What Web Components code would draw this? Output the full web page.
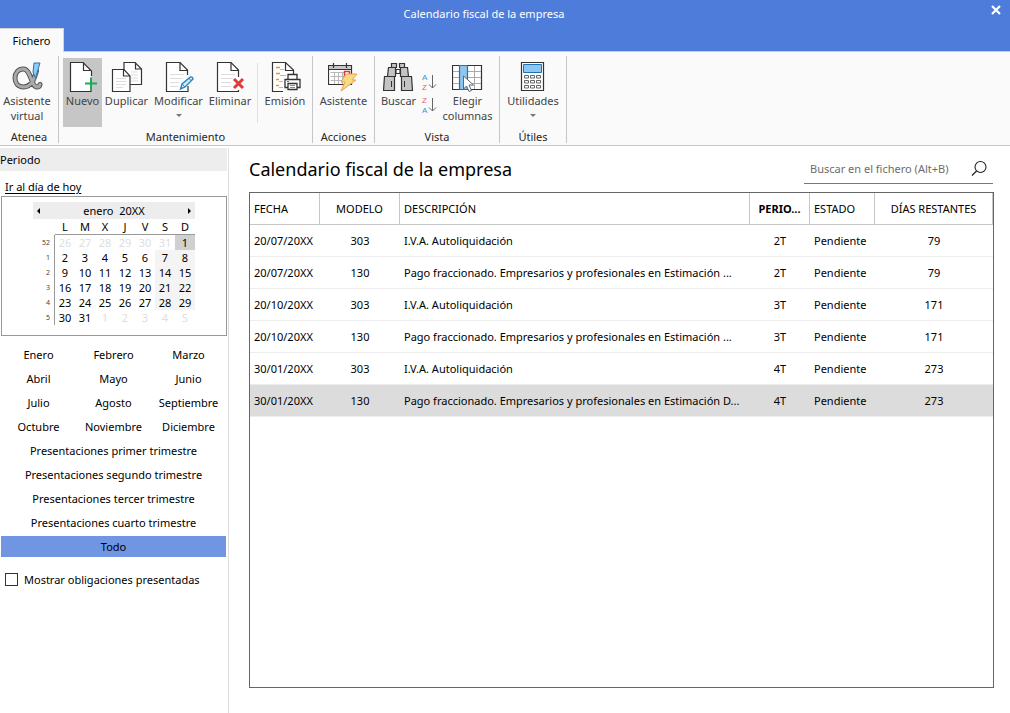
<!DOCTYPE html>
<html lang="es">
<head>
<meta charset="utf-8">
<meta name="viewport" content="width=device-width, initial-scale=1">
<title>Calendario fiscal de la empresa</title>
<style>
  html, body { margin: 0; height: 100%; }
  body { font: 11px/15px "Noto Sans", "Open Sans", sans-serif; color: #000; background: #fff; }
</style>
</head>
<body>
<fiscal-app></fiscal-app>

<script>
const define = (name, html, setup) => {
  const tpl = document.createElement('template');
  tpl.innerHTML = html;
  customElements.define(name, class extends HTMLElement {
    constructor() {
      super();
      this.attachShadow({ mode: 'open' }).append(tpl.content.cloneNode(true));
    }
    connectedCallback() {
      if (setup && !this.ready) { this.ready = true; setup(this.shadowRoot, this); }
    }
  });
};

/* ---------- Title bar ---------- */
define('title-bar', `
  <style>
    :host { display: block; background: #4d7cdb; color: #fff; }
    header { display: flex; align-items: flex-start; height: 28px; }
    h1 { flex: 1; margin: 0; font: inherit; line-height: 27px; text-align: center; }
    button { display: flex; justify-content: flex-end; align-items: center; width: 42px; height: 20px; padding: 0 9px 0 0; border: 0; background: none; }
    nav { display: flex; height: 24px; }
    nav button { width: 64px; height: 24px; justify-content: center; padding: 0; font: inherit; color: #000; background: #fafafa; border: 1px solid #d5d5d5; border-width: 1px 1px 0 0; box-sizing: border-box; }
    nav i { flex: 1; border-bottom: 1px solid #c6d0e4; }
  </style>
  <header>
    <h1><slot></slot></h1>
    <button aria-label="Cerrar"><svg width="10" height="10" viewBox="0 0 10 10"><path d="M1 1l8 8M9 1L1 9" stroke="#fff" stroke-width="2.2"/></svg></button>
  </header>
  <nav><button>Fichero</button><i></i></nav>
`);

/* ---------- Ribbon ---------- */
define('ribbon-button', `
  <style>
    :host { display: block; flex: none; width: var(--w, 48px); }
    button { display: flex; flex-direction: column; align-items: center; width: 100%; height: 69px; margin: 0; padding: 3px 0 0; border: 0; background: none; font: inherit; color: #444; text-align: center; white-space: nowrap; }
    :host([active]) button { background: #c6c6c6; }
    ::slotted(svg) { display: block; width: 32px; height: 32px; flex: none; }
    .arrow { display: none; margin-top: 6px; border: 3px solid transparent; border-top-color: #777; border-bottom: 0; }
    :host([menu]) .arrow { display: block; }
    .label { white-space: pre-line; }
  </style>
  <button><slot></slot><span class="label"></span><span class="arrow"></span></button>
`, (root, host) => {
  root.querySelector('.label').textContent = host.getAttribute('label').replace('|', '\n');
});

define('ribbon-group', `
  <style>
    :host { display: flex; flex-direction: column; border-right: 1px solid #c6c6c6; height: 85px; padding-top: 2px; }
    .items { display: flex; flex: 1; }
    .name { text-align: center; color: #262626; line-height: 13px; }
  </style>
  <div class="items"><slot></slot></div>
  <div class="name"></div>
`, (root, host) => { root.querySelector('.name').textContent = host.getAttribute('name'); });

define('ribbon-bar', `
  <style>
    :host { display: flex; background: #fafafa; border-bottom: 1px solid #c6c6c6; padding: 4px 0 2px; }
    .sep { width: 1px; height: 60px; background: #e1e1e1; margin: 5px 0 0 3px; }
    .sort { display: flex; flex-direction: column; gap: 3px; width: 15px; padding: 14px 0 0; }
    .sort button { padding: 0; border: 0; background: none; height: 20px; }
    .sort svg { display: block; }
    .sort text { font: 8px "Liberation Sans", sans-serif; }
  </style>
  <ribbon-group name="Atenea">
    <ribbon-button label="Asistente|virtual" style="--w:54px;margin-right:4px">
      <svg viewBox="0 0 32 32"><g fill="none" stroke-linecap="round"><path d="M25.500 10c-2 7-4.500 16-13 16C7 26 4 22 4 17S7 8 12.500 8C20 8 20 26 26 26c1.600 0 2.600-1 3-2.500" stroke="#555" stroke-width="5"/><path d="M25.500 10c-2 7-4.500 16-13 16C7 26 4 22 4 17S7 8 12.500 8C20 8 20 26 26 26c1.600 0 2.600-1 3-2.500" stroke="#aaa" stroke-width="3"/></g><path d="M23 2h6l-4.500 15-2.500-6z" fill="#8fcbf3" stroke="#1e78b8"/></svg>
    </ribbon-button>
  </ribbon-group>
  <ribbon-group name="Mantenimiento">
    <ribbon-button label="Nuevo" active style="--w:39px;margin-left:4px">
      <svg viewBox="1 0 32 32"><path d="M25 20v10.500H4.500V1.500H17L25.500 10v5" fill="#fff" stroke="#333" stroke-width="1.200"/><path d="M17.500 1.500V9.500H25" fill="none" stroke="#333" stroke-width="1.200"/><path d="M19 22.500h12M25 16.500v12" stroke="#1bab58" stroke-width="2"/></svg>
    </ribbon-button>
    <ribbon-button label="Duplicar" style="--w:49px">
      <svg viewBox="0 0 32 32"><g fill="#fff" stroke="#333" stroke-width="1.200"><path d="M13 1.500h11L30.500 8v15.500H13z"/><path d="M24.500 1.500V8h6" fill="none"/><path d="M20 14h7M20 17h7M20 11h7M20 20h7" stroke="#ddd"/><path d="M1.500 8.500H13L19 15v15.500H1.500z"/><path d="M12.500 8.500V15H19" fill="none"/></g><path d="M5 17.500h10M5 20.500h10M5 23.500h10M5 26.500h7" stroke="#ddd"/></svg>
    </ribbon-button>
    <ribbon-button label="Modificar" menu style="--w:55px">
      <svg viewBox="0 0 32 32"><path d="M25 25v5.500H3.500V1.500H17L24.500 9v5" fill="#fff" stroke="#333" stroke-width="1.200"/><path d="M17 1.500v8h7.500" fill="none" stroke="#333" stroke-width="1.200"/><path d="M7 13.500h14M7 17.500h12M7 21.500h9M7 25.500h8" stroke="#ddd"/><path d="M17.500 28l1.500-5 8.500-7q2-.5 2.500 2l-8 8z" fill="#d5ebf8" stroke="#2886c4" stroke-width="1.400"/><path d="M19 23l3 3M26 17.500l2.500 2.500" stroke="#2886c4"/></svg>
    </ribbon-button>
    <ribbon-button label="Eliminar" style="--w:48px">
      <svg viewBox="0 0 32 32"><path d="M24.500 29v1.500H3.500V1.500H17L24.500 9v7" fill="#fff" stroke="#333" stroke-width="1.200"/><path d="M17 1.500v8h7.500" fill="none" stroke="#333" stroke-width="1.200"/><path d="M7 13.500h14M7 17.500h12M7 21.500h10M7 25.500h10" stroke="#ddd"/><path d="M20 18l9 9M29 18l-9 9" stroke="#e03a3a" stroke-width="3"/></svg>
    </ribbon-button>
    <span class="sep"></span>
    <ribbon-button label="Emisión" style="--w:54px">
      <svg viewBox="0 0 32 32"><path d="M14 30.500H3.500V1.500H16.500L24.500 9v4" fill="#fff" stroke="#333" stroke-width="1.200"/><path d="M16.500 1.500v8h8" fill="none" stroke="#333" stroke-width="1.200"/><path d="M7 6.500h4M7 12.500h4M7 18.500h3M7 24.500h3" stroke="#e59a27" stroke-width="1.300"/><path d="M11 8.500h4M11 14.500h6M10 20.500h4M10 26.500h4" stroke="#bbb"/><g fill="#fff" stroke="#333" stroke-width="1.300"><path d="M19 18v-4.500h9V18"/><path d="M16 18.500h15v8H16z"/><path d="M19 22.500h9v6h-9z"/></g><path d="M21 24.500h5M21 26.500h5" stroke="#888"/><path d="M18 20.500h2" stroke="#2886c4"/></svg>
    </ribbon-button>
  </ribbon-group>
  <ribbon-group name="Acciones">
    <ribbon-button label="Asistente" style="--w:61px">
      <svg viewBox="2 0 32 32"><path d="M2.500 4.500H25.500v19H2.500z" fill="#fff" stroke="#333" stroke-width="1.200"/><path d="M3 5h22v3.500H3z" fill="#c8c8c8"/><path d="M2.500 8.500h23M7.500 2v5M20.500 2v5" stroke="#333" stroke-width="1.200"/><path d="M4.500 11.500h17M4.500 15.500h19M4.500 19.500h17M8.500 11v12M12.500 11v12M16.500 11v12" stroke="#b8b8b8"/><path d="M18.500 10.500h5v5h-5z" fill="#fff" stroke="#d8344e" stroke-width="1.500"/><path d="M20 13h11l-5 6h4L15 30l4-9h-4z" fill="#f8d984" stroke="#eda04f"/></svg>
    </ribbon-button>
  </ribbon-group>
  <ribbon-group name="Vista">
    <ribbon-button label="Buscar" style="--w:47px">
      <svg viewBox="1 0 32 32"><g fill="#c4c4c4" stroke="#333" stroke-width="1.200"><path d="M9.500 2.500h5v4h-5zM17.500 2.500h5v4h-5z"/><path d="M6.500 6.500h7v9h-8zM18.500 6.500h7l1 9h-8z"/><path d="M14 8.500h4v4h-4z" fill="#fff"/><path d="M2.500 15.500h10v14h-11zM19.500 15.500h10l1 14h-11z"/></g><path d="M9.500 20v6M22.500 20v6" stroke="#333"/></svg>
    </ribbon-button>
    <div class="sort">
      <button aria-label="Orden ascendente"><svg width="15" height="20"><text x="0" y="8" fill="#3b93cf">A</text><text x="0" y="18" fill="#e45e66">Z</text><path d="M10.500 3v13M7 12.500l3.500 3.500 3.500-3.500" fill="none" stroke="#666"/></svg></button>
      <button aria-label="Orden descendente"><svg width="15" height="20"><text x="0" y="8" fill="#e45e66">Z</text><text x="0" y="18" fill="#3b93cf">A</text><path d="M10.500 3v13M7 12.500l3.500 3.500 3.500-3.500" fill="none" stroke="#666"/></svg></button>
    </div>
    <ribbon-button label="Elegir|columnas" style="--w:61px;margin-right:1px">
      <svg viewBox="1 0 32 32"><path d="M1.500 4.500h29v24h-29z" fill="#fff" stroke="#333" stroke-width="1.200"/><path d="M2 10.500h28M2 16.500h28M2 22.500h28M15.500 5v23M23.500 5v23" stroke="#aaa"/><path d="M8.500 4.500h8v24h-8z" fill="#8fc6ee" stroke="#1e72b8" stroke-width="1.200"/><path d="M12.500 15v13l3-3 2.500 5.500 2.500-1-2.500-5.500h4.500z" fill="#fff" stroke="#666"/></svg>
    </ribbon-button>
  </ribbon-group>
  <ribbon-group name="Útiles">
    <ribbon-button label="Utilidades" menu style="--w:66px">
      <svg viewBox="0 0 32 32"><path d="M4.500 1.500h22v28h-22z" fill="#fff" stroke="#333" stroke-width="1.200"/><path d="M6.500 3.500h18v8h-18z" fill="#8fc6ee" stroke="#1e72b8"/><g fill="#fff" stroke="#666"><path d="M7.500 14.500h4v2.500h-4zM13.500 14.500h4v2.500h-4zM19.500 14.500h4v2.500h-4zM7.500 19.500h4v2.500h-4zM13.500 19.500h4v2.500h-4zM19.500 19.500h4v2.500h-4zM7.500 24.500h4v2.500h-4zM13.500 24.500h4v2.500h-4zM19.500 24.500h4v2.500h-4z"/></g></svg>
    </ribbon-button>
  </ribbon-group>
`);

/* ---------- Month calendar ---------- */
define('month-calendar', `
  <style>
    :host { display: block; border: 1px solid #999; padding: 5px 31px 10px; margin: 0 1px; }
    .head { display: flex; align-items: center; justify-content: space-between; width: 162px; height: 17px; background: #ededed; }
    .head button { width: 10px; height: 17px; padding: 0; border: 0; background: none; display: flex; align-items: center; justify-content: center; }
    .head button i { border: 3px solid transparent; }
    .prev i { border-right-color: #000 !important; border-left: 0 !important; }
    .next i { border-left-color: #000 !important; border-right: 0 !important; }
    .head span { white-space: pre; }
    table { border-collapse: separate; border-spacing: 0; table-layout: fixed; width: 162px; }
    th, td { width: 20px; height: 15px; padding: 0; font-weight: normal; line-height: 15px; text-align: center; box-sizing: border-box; }
    thead th { height: 16px; border-bottom: 1px solid #999; }
    thead th:first-child { width: 22px; border: 0; }
    tbody th { text-align: right; padding-right: 4px; font-size: 7px; color: #444; border-right: 1px solid #999; }
    .out { color: #dedede; }
    .we { background: #f4f4f4; }
    .sel { background: #d0d0d0; }
  </style>
  <div class="head">
    <button class="prev" aria-label="Mes anterior"><i></i></button>
    <span>enero  20XX</span>
    <button class="next" aria-label="Mes siguiente"><i></i></button>
  </div>
  <table>
    <thead><tr><th></th><th>L</th><th>M</th><th>X</th><th>J</th><th>V</th><th>S</th><th>D</th></tr></thead>
    <tbody></tbody>
  </table>
`, root => {
  const weeks = [52, 1, 2, 3, 4, 5];
  root.querySelector('tbody').innerHTML = weeks.map((w, r) => {
    let cells = '';
    for (let c = 0; c < 7; c++) {
      const n = r * 7 + c - 5;
      const day = n < 1 ? n + 31 : n > 31 ? n - 31 : n;
      const cls = n < 1 || n > 31 ? 'out' : n === 1 ? 'sel' : c > 4 ? 'we' : '';
      cells += `<td class="${cls}">${day}</td>`;
    }
    return `<tr><th>${w}</th>${cells}</tr>`;
  }).join('');
});

/* ---------- Period picker ---------- */
define('period-picker', `
  <style>
    :host { display: grid; grid-template-columns: repeat(3, 1fr); gap: 3px 0; margin: 8px 2px 0 1px; }
    button { height: 21px; padding: 0; border: 0; background: none; font: inherit; color: #000; }
    .wide { grid-column: 1 / -1; }
    .on { background: #6f95e3; }
  </style>
`, root => {
  const add = (text, cls) => {
    const b = document.createElement('button');
    b.textContent = text;
    b.className = cls;
    root.append(b);
  };
  ['Enero', 'Febrero', 'Marzo', 'Abril', 'Mayo', 'Junio', 'Julio', 'Agosto', 'Septiembre', 'Octubre', 'Noviembre', 'Diciembre'].forEach(m => add(m, ''));
  ['primer', 'segundo', 'tercer', 'cuarto'].forEach(t => add(`Presentaciones ${t} trimestre`, 'wide'));
  add('Todo', 'wide on');
});

/* ---------- Side panel ---------- */
define('side-panel', `
  <style>
    :host { display: block; width: 228px; flex: none; border-right: 1px solid #dcdcdc; }
    h2 { margin: 0 1px 0 0; height: 23px; font: inherit; line-height: 23px; background: #ededed; }
    a { display: block; width: fit-content; margin: 8px 0 2px 5px; color: #000; text-underline-offset: 2px; }
    label { display: flex; align-items: center; gap: 6px; margin: 15px 0 0 5px; }
    input { appearance: none; box-sizing: border-box; width: 13px; height: 13px; margin: 0; border: 1px solid #333; background: #fff; }
  </style>
  <h2>Periodo</h2>
  <a href="#hoy">Ir al día de hoy</a>
  <month-calendar></month-calendar>
  <period-picker></period-picker>
  <label><input type="checkbox">Mostrar obligaciones presentadas</label>
`);

/* ---------- Search ---------- */
define('search-field', `
  <style>
    :host { display: flex; align-items: center; width: 189px; height: 29px; padding-bottom: 2px; border-bottom: 1px solid #777; box-sizing: border-box; }
    input { flex: 1; min-width: 0; padding: 0 0 0 6px; border: 0; outline: 0; background: none; font: inherit; }
    input::placeholder { color: #6d6d6d; opacity: 1; }
    button { padding: 0 6px 0 0; border: 0; background: none; }
    svg { display: block; }
  </style>
  <input type="search" aria-label="Buscar en el fichero" placeholder="Buscar en el fichero (Alt+B)">
  <button aria-label="Buscar"><svg width="16" height="16" viewBox="0 0 16 16"><circle cx="9.500" cy="7" r="5.500" fill="none" stroke="#222" stroke-width="1.100"/><path d="M5.500 11L1 15.500" stroke="#222" stroke-width="1.200"/></svg></button>
`);

/* ---------- Filing table ---------- */
define('filing-table', `
  <style>
    :host { display: block; flex: 1; border: 1px solid #666; }
    table { width: 100%; table-layout: fixed; border-collapse: separate; border-spacing: 0; }
    th, td { box-sizing: border-box; height: 32px; padding: 0 4px; text-align: left; font-weight: normal; white-space: nowrap; overflow: hidden; }
    th { border: 1px solid #c6c6c6; border-width: 0 1px 1px 0; }
    td { border-bottom: 1px solid #ededed; }
    .c { text-align: center; }
    .b { font-weight: bold; }
    tr.on td { background: #dcdcdc; }
  </style>
  <table>
    <colgroup><col style="width:70px"><col style="width:80px"><col><col style="width:60px"><col style="width:65px"><col style="width:118px"></colgroup>
    <thead><tr><th>FECHA</th><th class="c">MODELO</th><th>DESCRIPCIÓN</th><th class="c b">PERIO...</th><th>ESTADO</th><th class="c">DÍAS RESTANTES</th></tr></thead>
    <tbody></tbody>
  </table>
`, root => {
  const iva = 'I.V.A. Autoliquidación';
  const pago = 'Pago fraccionado. Empresarios y profesionales en Estimación ';
  const rows = [
    ['20/07/20XX', 303, iva, '2T', 79],
    ['20/07/20XX', 130, pago + '...', '2T', 79],
    ['20/10/20XX', 303, iva, '3T', 171],
    ['20/10/20XX', 130, pago + '...', '3T', 171],
    ['30/01/20XX', 303, iva, '4T', 273],
    ['30/01/20XX', 130, pago + 'D...', '4T', 273]
  ];
  root.querySelector('tbody').innerHTML = rows.map(([f, m, d, p, n], i) =>
    `<tr class="${i === 5 ? 'on' : ''}"><td>${f}</td><td class="c">${m}</td><td>${d}</td><td class="c">${p}</td><td>Pendiente</td><td class="c">${n}</td></tr>`).join('');
});

/* ---------- Application ---------- */
define('fiscal-app', `
  <style>
    :host { display: flex; flex-direction: column; min-height: 100vh; }
    .body { display: flex; flex: 1; padding-top: 2px; }
    main { display: flex; flex-direction: column; flex: 1; min-width: 0; padding: 7px 16px 25px 20px; }
    .top { display: flex; justify-content: space-between; align-items: flex-start; padding-right: 1px; margin-bottom: 8px; }
    h2 { margin: 0; font-size: 18px; line-height: 28px; font-weight: normal; }
  </style>
  <title-bar>Calendario fiscal de la empresa</title-bar>
  <ribbon-bar></ribbon-bar>
  <div class="body">
    <side-panel></side-panel>
    <main>
      <div class="top"><h2>Calendario fiscal de la empresa</h2><search-field></search-field></div>
      <filing-table></filing-table>
    </main>
  </div>
`);
</script>
</body>
</html>
